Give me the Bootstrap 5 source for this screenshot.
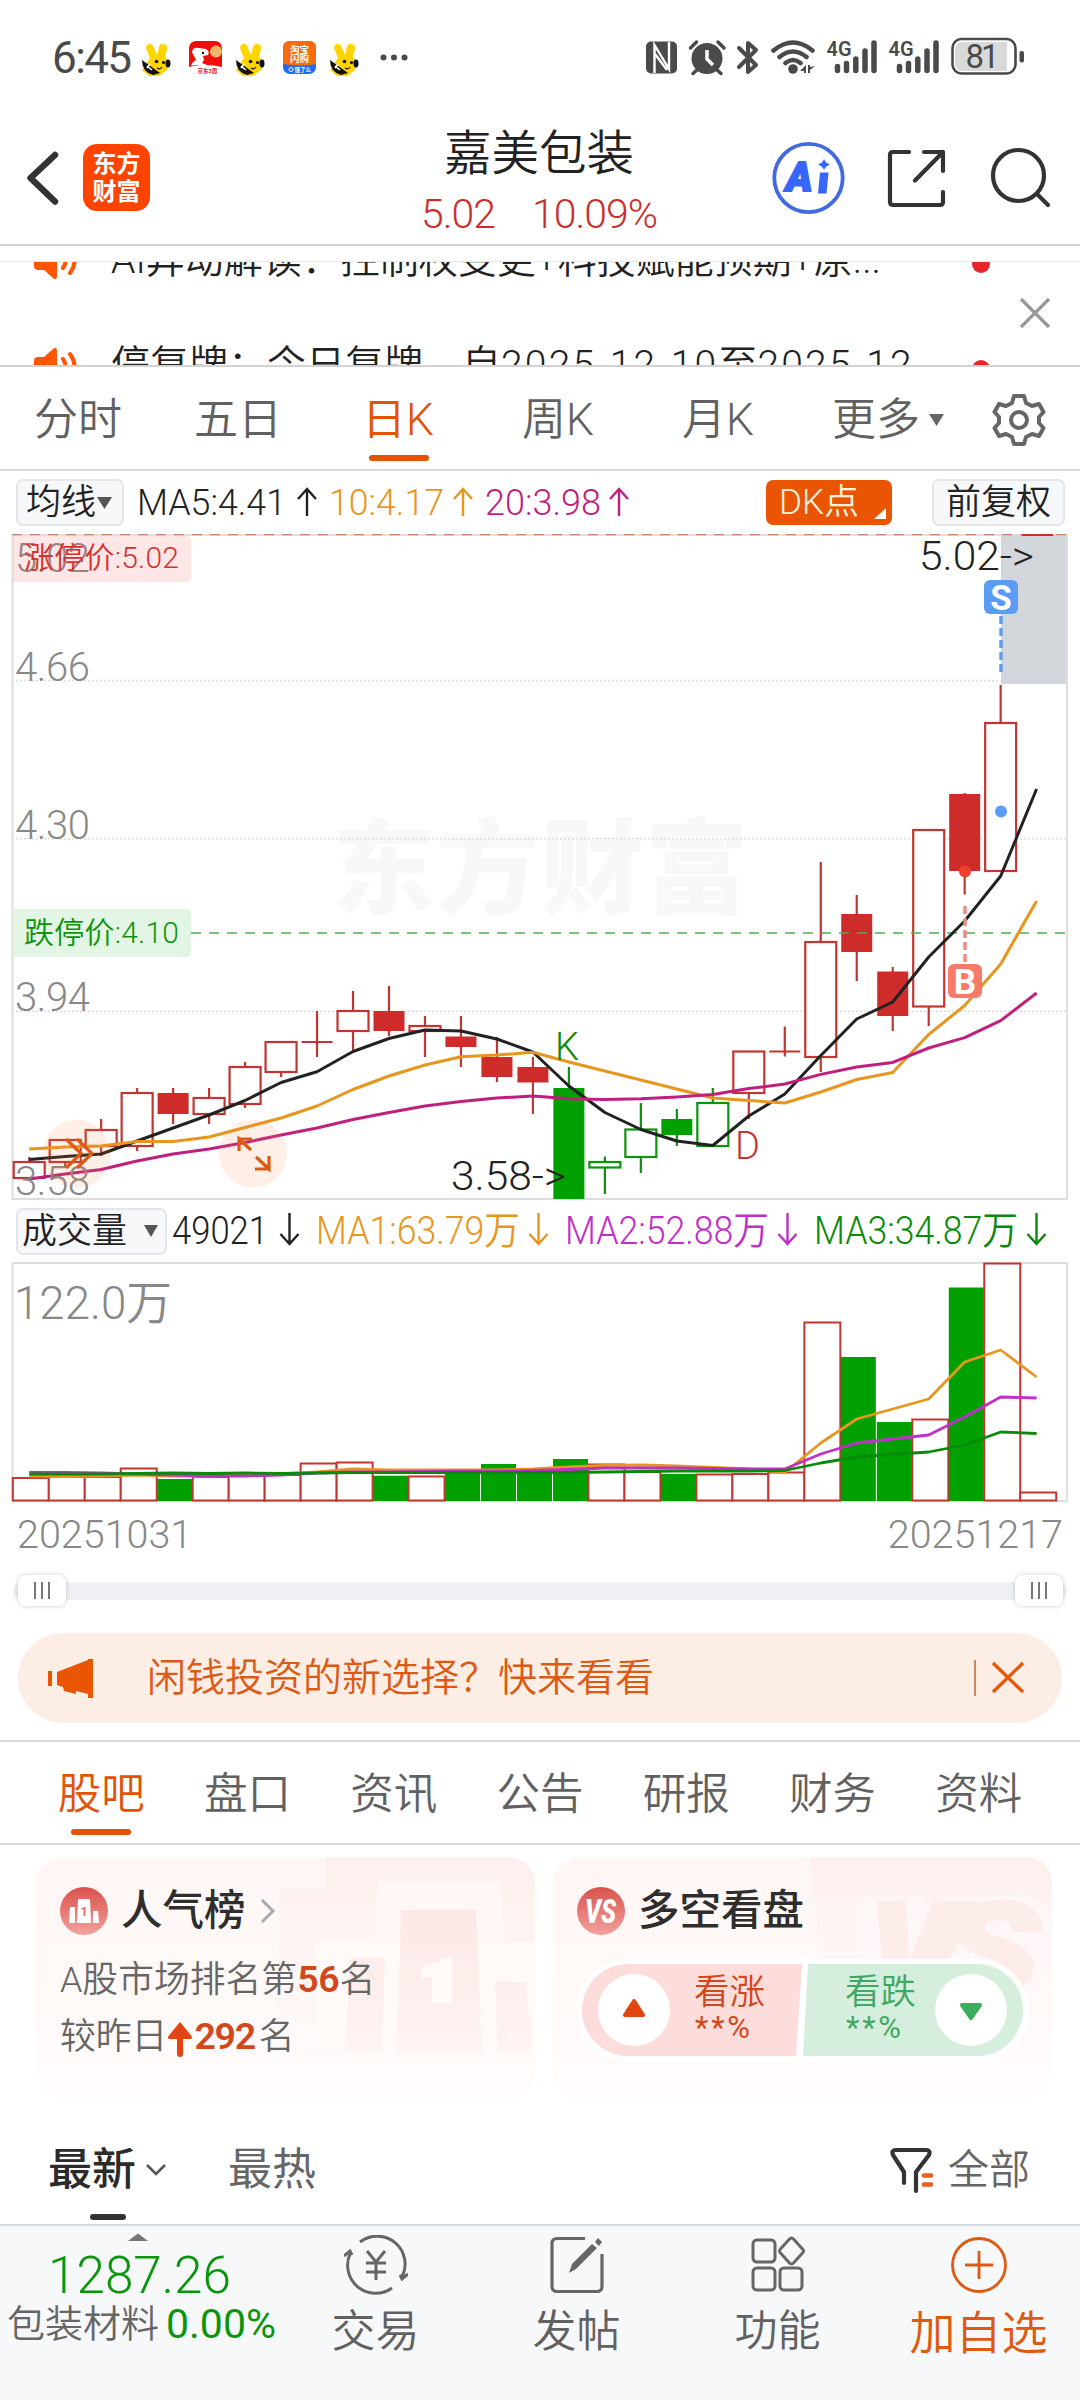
<!DOCTYPE html>
<html lang="zh-CN">
<head>
<meta charset="utf-8">
<meta name="viewport" content="width=device-width, initial-scale=1">
<title>嘉美包装</title>
<link href="https://cdn.jsdelivr.net/npm/bootstrap@5.3.0/dist/css/bootstrap.min.css" rel="stylesheet">
<style>
:root{--brand:#e35205;--up:#c9302c;--ink:#222;--mid:#616161}
html,body{overflow-x:hidden}
body{font-family:Roboto,"Noto Sans CJK SC",sans-serif;font-weight:350;color:var(--ink);background:#fff;line-height:1}
.screen{width:1080px;height:2400px;overflow:hidden}
svg{display:block;flex:none}
svg text{font-family:Roboto,"Noto Sans CJK SC",sans-serif}
.nw{white-space:nowrap}
.status{height:84px;padding:33px 0 1px 52px;color:#4a4a4a}
.clock{font-size:44px;width:84px;letter-spacing:-1.6px;font-weight:400}
.topbar{height:162px;border-bottom:2px solid #d3d3d3}
.back-ico{margin-left:26px}
.brand-logo{width:67px;height:67px;border-radius:14px;background:#ff4400;color:#fff;font-weight:700;font-size:24px;line-height:28px;margin-left:24px}
.stock-title{position:relative;width:300px;margin-left:239px}
.stock-name{font-size:47.5px;line-height:62px}
.stock-quote{font-size:41px;line-height:58px;color:var(--up);letter-spacing:-1px;gap:37px}
.gapline{height:16px;border-bottom:1px solid #e8e8e8}
.news{height:105px;border-bottom:2px solid #d3d3d3;position:relative}
.news-list{margin-top:-54px}
.news-item{height:105px;font-size:39px;padding-left:32px}
.news-item .news-text{margin-left:32px;width:834px}
.news-item .day{letter-spacing:2.2px}
.news-dot{width:18px;height:18px;border-radius:50%;background:#e8252b;margin-left:27px;margin-top:6px}
.news-close{position:absolute;left:1018px;top:34px}
.ktabs{height:104px;border-bottom:2px solid #dcdcdc;font-size:44px;color:var(--mid);position:relative;padding-top:3px}
.ktabs .k{width:160px;height:100%;margin-left:-1px;margin-right:1px;padding-right:2px}
.on{color:var(--brand)!important;position:relative}
.on::after{content:"";position:absolute;left:50%;margin-left:-30px;width:60px;height:6px;border-radius:3px;background:var(--brand);bottom:8px}
.ma-row{height:63px;padding-left:16px;font-size:35px}
.pick{height:47px;border:2px solid #e4e6ea;background:#f7f8fa;border-radius:7px;font-size:35px}
.dk{width:126px;height:45px;border-radius:7px;background:#ea5504;color:#fff3dc;position:relative;font-size:35px;padding-left:13px}
.vol-row{height:62px;padding-left:16px;font-size:36px}
.dates{height:64px;padding:2px 17px 0 17px;font-size:39.5px;color:#888}
.slider{height:50px;padding:0 13px;position:relative}
.track{height:18px;border-radius:9px;background:#f0f1f4}
.grip{width:48px;height:31px;border-radius:8px;background:#fff;box-shadow:0 0 5px rgba(0,0,0,.2);gap:5px;position:absolute;top:9px}
.grip i{width:2px;height:17px;background:#777}
.promo{height:90px;width:1044px;margin:17px 18px;border-radius:45px;background:#fdeee5;color:#dc5a14;font-size:39px}
.ftabs{height:105px;border-top:2px solid #d8d8d8;border-bottom:2px solid #d8d8d8;font-size:43.5px;color:var(--mid);padding:0 28px}
.ftabs .f{flex:1;height:100%;padding-top:4px}
.cards{padding:12px 28px 0 36px;gap:18px}
.tile{width:499px;height:241px;border-radius:26px;background:linear-gradient(#fff7f5,#fff9f8 60%,#fffdfc);position:relative;overflow:hidden}
.tile>.art{position:absolute;left:0;top:0}
.tile-body{position:relative}
.tile h2{font-size:41.5px;font-weight:500;color:#2e2e2e;line-height:1;margin:0 0 0 13px}
.tile-head{padding:30px 0 0 24px;height:78px}
.rank{font-size:35.8px;line-height:56px;color:#666;padding-left:24px;margin-top:16px}
.rank b{color:#d2481c;font-weight:600;font-size:37.5px;letter-spacing:-.3px}
.vote{position:absolute;left:24px;top:102px}
.feed{height:126px;padding:18px 0 0 48px;font-size:44px}
.feed .cur{font-weight:500;color:#2b2b2b;position:relative}
.feed .cur::after{content:"";position:absolute;left:42px;width:36px;height:6px;border-radius:3px;background:#333;top:66px}
.dock{height:176px;background:#f7f8fa;border-top:2px solid #d5dadf}
.dock .item{font-size:44px;color:var(--mid);width:201px;padding-top:9px}
.dock .lbl{margin-top:15px}
.index-box{width:275px;position:relative;padding-top:2px}
</style>
<script src="https://cdn.jsdelivr.net/npm/bootstrap@5.3.0/dist/js/bootstrap.bundle.min.js"></script>
</head>
<body>
<div class="screen d-flex flex-column">
  <!-- status bar -->
  <div class="status d-flex align-items-center flex-shrink-0">
    <span class="clock">6:45</span>
    <svg width="290" height="50" viewBox="136 33 290 50">
      <defs><g id="bee">
        <path d="M150 58 146 48q0-4 4-4 3 0 4 4l3 7 2-8q1-4 5-3 4 1 3 5l-2 8q7 7 2 13l-8 6h-10l-7-6Z" fill="#ffd500"/>
        <path d="M142 60 160 73 153 75Q142 72 142 60Z" fill="#111"/><path d="m147 66 5 4m-2-6-3 4" stroke="#fff" stroke-width="1.6"/>
        <ellipse cx="168" cy="63.500" rx="2.500" ry="4" fill="#111"/><circle cx="156.500" cy="61.500" r="1.800" fill="#111"/><circle cx="163.500" cy="62.500" r="1.600" fill="#111"/><path d="M157 68q3 2 5-1" fill="none" stroke="#111" stroke-width="1.200"/>
      </g></defs>
      <use href="#bee"/><use href="#bee" x="94"/><use href="#bee" x="188"/>
      <rect x="189" y="41" width="33" height="33" rx="7" fill="#f20d0d"/><path d="M189 67q16-4 33 0v1q0 6-7 6h-19q-7 0-7-6Z" fill="#fff"/>
      <circle cx="216" cy="51.500" r="6" fill="#f3b563"/><path d="M192 52q1-5 7-4l7 1q4 2 2 6l-5 1 1 4-2 3 5 2-2 2-9-2-5 1 2-4 3-2-2-4Z" fill="#fff"/><circle cx="203" cy="53" r="1.200"/>
      <text x="197.500" y="73" font-size="5.500" fill="#d22" font-weight="700">京东3周</text>
      <rect x="283" y="41" width="33" height="33" rx="7" fill="#1d6df0"/><path d="M283 64V48q0-7 7-7h19q7 0 7 7v16q-16 3-33 0Z" fill="#f76b0c"/>
      <text x="290" y="52.500" font-size="9.500" fill="#fff" font-weight="700">淘宝</text><text x="290" y="62" font-size="9.500" fill="#fff" font-weight="700">闪购</text>
      <circle cx="291" cy="69.500" r="2" fill="none" stroke="#fff" stroke-width="1"/><text x="294.500" y="72" font-size="5.500" fill="#fff" font-weight="700">饿了么</text>
      <g fill="#4a4a4a"><circle cx="383.500" cy="57.500" r="3"/><circle cx="394" cy="57.500" r="3"/><circle cx="404.500" cy="57.500" r="3"/></g>
    </svg>
    <svg width="400" height="50" viewBox="640 33 400 50" style="margin-left:214px" fill="#4a4a4a">
      <rect x="646" y="41.500" width="31" height="32" rx="5"/><path d="M654.500 73V45L669 69V42M655 54l12 16" fill="none" stroke="#fff" stroke-width="2.400"/>
      <circle cx="707" cy="58.500" r="15.500"/><path d="M707 50v9l6 6" fill="none" stroke="#fff" stroke-width="3.500"/><path d="m690.500 48 6-6M724 48l-6-6M698 69l-5 4.500M716 69l5 4.500" stroke="#4a4a4a" stroke-width="3.500" stroke-linecap="round"/>
      <path d="m739 48 17 17-8 7V43l8 7-17 17" fill="none" stroke="#4a4a4a" stroke-width="4" stroke-linejoin="round" stroke-linecap="round"/>
      <g fill="none" stroke="#4a4a4a" stroke-width="4.500" stroke-linecap="round"><path d="M773.500 50.500q19.500-16 39 0M779.500 57q13.500-11 27 0M785.500 63q7.500-6 15 0"/></g><circle cx="793" cy="69" r="4.800"/><path d="m800 71 6-6v8h-2v-2ZM808 65v8h2v-3l5-4-5 1v-2Z"/>
      <g id="sig"><text x="826.500" y="56" font-size="21" font-weight="600" textLength="25" lengthAdjust="spacingAndGlyphs">4G</text>
      <g stroke="#4a4a4a" stroke-width="5.500" stroke-linecap="round"><path d="M837.500 66.500v4M846.500 63.500v7M855.800 59v11.500M865 51v19.500M874 43v27.500"/></g></g>
      <use href="#sig" x="62"/>
      <rect x="952.500" y="39" width="63" height="34.500" rx="9" fill="#fff" stroke="#4a4a4a" stroke-width="2.600"/><path d="M1007 42v29h-45q-7-1-7-8V49q0-6 7-7Z" fill="#d9d9d9"/>
      <rect x="1019.500" y="51" width="4.500" height="11.500" rx="2"/><text x="965.500" y="67.500" font-size="33" font-weight="400" textLength="34">81</text>
    </svg>
  </div>

  <!-- title bar -->
  <header class="topbar d-flex align-items-center flex-shrink-0">
    <div class="d-flex align-items-center" style="margin-top:27px">
      <svg class="back-ico" width="33" height="60" viewBox="26 148.500 33 60"><path d="M55 155.500 30.500 178.500 55 202" fill="none" stroke="#333" stroke-width="6.500" stroke-linecap="round" stroke-linejoin="round"/></svg>
      <div class="brand-logo d-flex flex-column align-items-center justify-content-center nw"><span>东方</span><span>财富</span></div>
    </div>
    <div class="stock-title text-center nw" style="margin-top:37px">
      <div class="stock-name">嘉美包装</div>
      <div class="stock-quote d-flex justify-content-center"><span>5.02</span><span>10.09%</span></div>
    </div>
    <svg width="310" height="90" viewBox="760 133 310 90" style="margin:27px 0 0 71px">
      <circle cx="808.500" cy="178" r="34.200" fill="none" stroke="#4169e1" stroke-width="3.800"/>
      <text x="786" y="191" font-size="40" font-weight="900" font-style="italic" fill="#3766fb" stroke="#3766fb" stroke-width="2">A</text>
      <path d="M820 172.500h8.500l-2 21h-8.500ZM824 159q1.500 4 6 5.500-4.500 1.500-6 5.500-1.500-4-6-5.500 4.500-1.500 6-5.500Z" fill="#3766fb"/>
      <g fill="none" stroke="#333" stroke-width="4.200" stroke-linecap="round" stroke-linejoin="round">
      <path d="M909 152H893q-3 0-3 3v47q0 3 3 3h47q3 0 3-3V192M924 152h19v19M943 152 915 180.500"/>
      <circle cx="1018.500" cy="175.500" r="25.500"/><path d="m1037 194 11 11"/></g>
    </svg>
  </header>

  <!-- announcements, cut by the frame of their list -->
  <div class="gapline flex-shrink-0"></div>
  <div class="news flex-shrink-0 overflow-hidden">
    <div class="news-list">
      <div class="news-item d-flex align-items-center nw"><svg width="47" height="36" viewBox="0 0 47 36"><use href="#horn"/></svg><span class="news-text">AI异动解读：控制权变更+科技赋能预期+原...</span><span class="news-dot"></span></div>
      <div class="news-item d-flex align-items-center nw"><svg width="47" height="36" viewBox="0 0 47 36"><g id="horn"><path d="M2 13q0-4 4-4h6L21 1q4-3 4 2v30q0 5-4 2l-9-8H6q-4 0-4-4Z" fill="#ff5500"/><path d="M31 11q5 7 0 14M38 6q9 12 0 24" fill="none" stroke="#ff5500" stroke-width="4" stroke-linecap="round"/></g></svg><span class="news-text">停复牌：今日复牌，自<span class="day">2025-12-10</span>至<span class="day">2025-12</span></span><span class="news-dot"></span></div>
    </div>
    <svg class="news-close" width="34" height="34" viewBox="0 0 34 34"><path d="m3 3 28 28M31 3 3 31" stroke="#999" stroke-width="3.200"/></svg>
  </div>

  <!-- period tabs -->
  <nav class="ktabs d-flex flex-shrink-0 nw">
    <span class="k d-flex align-items-center justify-content-center">分时</span><span class="k d-flex align-items-center justify-content-center">五日</span><span class="k on d-flex align-items-center justify-content-center">日K</span><span class="k d-flex align-items-center justify-content-center">周K</span><span class="k d-flex align-items-center justify-content-center">月K</span>
    <span class="d-flex align-items-center" style="margin-left:32px">更多<svg width="15" height="12" style="margin-left:9px"><path d="M0 0h15L7.500 12Z" fill="#666"/></svg></span>
    <svg class="align-self-center" width="56" height="56" viewBox="-28 -28 56 56" style="margin-left:47px"><path d="M-5-24H5L7-17 13-14 20-16 24.500-8 20-3V3l4.500 5L20 16l-7-2-6 3-2 7H-5l-2-7-6-3-7 2-4.500-8L-20 3V-3l-4.500-5L-20-16l7 2 6-3Z" fill="none" stroke="#666" stroke-width="4" stroke-linejoin="round"/><circle r="8" fill="none" stroke="#666" stroke-width="4"/></svg>
  </nav>

  <!-- moving averages -->
  <div class="ma-row d-flex align-items-center flex-shrink-0 nw">
    <span class="pick d-flex align-items-center" style="width:108px;padding-left:8px">均线<svg width="15" height="12" style="margin-left:1px"><path d="M0 0h15L7.500 12Z" fill="#555"/></svg></span>
    <svg width="620" height="50" viewBox="124 478 620 50" font-size="37">
      <text x="137" y="515" textLength="149" lengthAdjust="spacingAndGlyphs" fill="#222">MA5:4.41</text><text x="329" y="515" textLength="115" lengthAdjust="spacingAndGlyphs" fill="#e8961e">10:4.17</text><text x="485" y="515" textLength="116" lengthAdjust="spacingAndGlyphs" fill="#c01f7e">20:3.98</text>
      <g fill="none" stroke-width="2.400"><path d="M307 516V489m-9 10 9-10 9 10" stroke="#222"/><path d="M463 516V489m-9 10 9-10 9 10" stroke="#e8961e"/><path d="M619 516V489m-9 10 9-10 9 10" stroke="#c01f7e"/></g>
    </svg>
    <span class="dk d-flex align-items-center" style="margin-left:22px">DK点<svg width="12" height="11" style="position:absolute;right:6px;bottom:6px"><path d="M12 0v11H0Z" fill="#fff"/></svg></span>
    <span class="pick d-flex align-items-center justify-content-center" style="width:133px;margin-left:40px">前复权</span>
  </div>

  <svg id="kchart" class="flex-shrink-0" width="1080" height="666" viewBox="0 534 1080 666"></svg>

  <!-- volume legend -->
  <div class="vol-row d-flex align-items-center flex-shrink-0 nw">
    <span class="pick d-flex align-items-center" style="width:151px;padding-left:4px">成交量<svg width="14" height="12" style="margin-left:17px"><path d="M0 0h14L7 12Z" fill="#555"/></svg></span>
    <svg width="900" height="50" viewBox="167 1207 900 50" font-size="39">
      <text x="172" y="1245" textLength="96" lengthAdjust="spacingAndGlyphs" fill="#222">49021</text><text x="316" y="1245" textLength="204" lengthAdjust="spacingAndGlyphs" fill="#e8961e">MA1:63.79万</text><text x="565" y="1245" textLength="204" lengthAdjust="spacingAndGlyphs" fill="#c02fc8">MA2:52.88万</text><text x="814" y="1245" textLength="204" lengthAdjust="spacingAndGlyphs" fill="#0a8a0a">MA3:34.87万</text>
      <g fill="none" stroke-width="2.400"><path d="M289.500 1214v31m-9-10 9 10 9-10" stroke="#222"/><path d="M538.500 1214v31m-9-10 9 10 9-10" stroke="#e8961e"/><path d="M787.500 1214v31m-9-10 9 10 9-10" stroke="#c02fc8"/><path d="M1036.500 1214v31m-9-10 9 10 9-10" stroke="#0a8a0a"/></g>
    </svg>
  </div>
  <svg id="vchart" class="flex-shrink-0" width="1080" height="240" viewBox="0 1262 1080 240"></svg>
  <div class="dates d-flex justify-content-between align-items-center flex-shrink-0"><span>20251031</span><span>20251217</span></div>

  <div class="slider flex-shrink-0 d-flex flex-column justify-content-center">
    <div class="track"></div>
    <span class="grip d-flex align-items-center justify-content-center" style="left:18px"><i></i><i></i><i></i></span>
    <span class="grip d-flex align-items-center justify-content-center" style="right:17px"><i></i><i></i><i></i></span>
  </div>

  <div class="promo d-flex align-items-center flex-shrink-0 nw">
    <svg width="48" height="42" viewBox="46 1656 48 42" style="margin-left:28px"><path d="M48 1670h4v15h-4zM57 1671 88 1659v-1h5v39h-5v-4l-12-3v3l-12-3-1-4-6-2Z" fill="#ea5504"/></svg>
    <span style="margin-left:53px">闲钱投资的新选择？快来看看</span>
    <svg width="54" height="40" viewBox="972 1658 54 40" class="ms-auto" style="margin-right:36px"><path d="M975 1660v36" stroke="#c98a60" stroke-width="2"/><path d="m993 1663 30 29M1023 1663l-30 29" stroke="#ea5504" stroke-width="3.200"/></svg>
  </div>

  <nav class="ftabs d-flex flex-shrink-0 nw">
    <span class="f on d-flex align-items-center justify-content-center">股吧</span><span class="f d-flex align-items-center justify-content-center">盘口</span><span class="f d-flex align-items-center justify-content-center">资讯</span><span class="f d-flex align-items-center justify-content-center">公告</span><span class="f d-flex align-items-center justify-content-center">研报</span><span class="f d-flex align-items-center justify-content-center">财务</span><span class="f d-flex align-items-center justify-content-center">资料</span>
  </nav>

  <!-- community tiles -->
  <div class="cards d-flex flex-shrink-0 nw">
    <section class="tile">
      <svg class="art" width="499" height="241" viewBox="36 1857 499 241">
        <defs><linearGradient id="fade" x1="0" y1="0" x2="0" y2="1"><stop offset="0" stop-color="#fdf0ee"/><stop offset="1" stop-color="#fffaf9"/></linearGradient><linearGradient id="fade2" x1="0" y1="0" x2="0" y2="1"><stop offset="0" stop-color="#fce8e7"/><stop offset="1" stop-color="#fef4f2"/></linearGradient></defs>
        <path d="M326 1857H535V2060H279V1889H326Z" fill="url(#fade)"/><path d="M314 1939h60l4-58H500l5 60h30V2055H314Z" fill="#fff9f8" opacity=".75"/>
        <path d="M350 1958h35l-3 95h-37ZM401 1910h75l6 143h-85ZM495 1982h31l6 71h-34Z" fill="url(#fade2)"/><path d="m421 1968 31-12v47h-20v-27l-11 3Z" fill="#fff9f8"/>
      </svg>
      <div class="tile-body">
        <div class="tile-head d-flex align-items-center">
          <svg width="48" height="48" viewBox="0 0 48 48"><defs><linearGradient id="ball" x1="0" y1="0" x2="0" y2="1"><stop offset="0" stop-color="#db514d"/><stop offset="1" stop-color="#f3a29d"/></linearGradient></defs><circle cx="24" cy="24" r="24" fill="url(#ball)"/><path d="M10 20h5v16H9ZM18 12h12l1 24H17ZM33 24h5l1 12h-6Z" fill="#fff"/><text x="20.500" y="28.500" font-size="12.500" font-weight="700" fill="#e06c66">1</text></svg>
          <h2>人气榜</h2>
          <svg width="16" height="26" style="margin-left:14px"><path d="m2 2 11 11L2 24" fill="none" stroke="#aaa" stroke-width="3"/></svg>
        </div>
        <div class="rank">A股市场排名第<b>56</b>名<br>较昨日<svg class="d-inline-block" width="26" height="36" viewBox="0 0 26 36" style="vertical-align:-9px"><path d="M13 0 24.500 14q1.500 3-1.500 3h-7v15q0 3-3 3t-3-3V17H3q-3 0-1.500-3Z" fill="#e24412"/></svg><b style="margin:0 4px 0 1px;letter-spacing:-1.3px">292</b>名</div>
      </div>
    </section>
    <section class="tile">
      <svg class="art" width="499" height="241" viewBox="553 1857 499 241">
        <path d="M810 1857h242v100l-30 60H826Z" fill="url(#fade)"/><path d="M856 1896h65l12 10 16-10h80l23 14v60l-20 30H862Z" fill="#fff8f7" opacity=".8"/>
        <path d="M877 1901h29l3 60 24-60h46l-48 95h-46Z" fill="#fcecea"/>
        <text x="942" y="1994" font-size="128" font-weight="900" font-style="italic" fill="#fcecea" textLength="97" lengthAdjust="spacingAndGlyphs" stroke="#fcecea" stroke-width="4">S</text>
      </svg>
      <div class="tile-body">
        <div class="tile-head d-flex align-items-center">
          <svg width="48" height="48" viewBox="0 0 48 48"><circle cx="24" cy="24" r="24" fill="url(#ball)"/><text x="8" y="36" font-size="33" font-weight="900" font-style="italic" fill="#fff" textLength="31" lengthAdjust="spacingAndGlyphs">VS</text></svg>
          <h2>多空看盘</h2>
        </div>
      </div>
      <svg class="vote" width="454" height="104" viewBox="577 1959 454 104">
        <rect x="577" y="1959" width="452" height="102" rx="51" fill="#fff"/>
        <path d="M628 1964H802L796 2056H628a46 46 0 0 1 0-92Z" fill="#fddddb"/><path d="M808 1964H977a46 46 0 0 1 0 92H803Z" fill="#d6eedd"/>
        <circle cx="634" cy="2010" r="36" fill="#fff"/><circle cx="971" cy="2010" r="36" fill="#fff"/>
        <path d="m634 2001 9 14h-18Z" fill="#e24412" stroke="#e24412" stroke-width="4" stroke-linejoin="round"/><path d="m971 2018 9-13h-18Z" fill="#3cae60" stroke="#3cae60" stroke-width="4" stroke-linejoin="round"/>
        <g font-size="35.500" fill="#d2481c"><text x="694" y="2004">看涨</text><text x="695" y="2038" font-size="31" font-weight="400" textLength="55">**%</text></g>
        <g font-size="35.500" fill="#3fa862"><text x="845" y="2004">看跌</text><text x="846" y="2038" font-size="31" font-weight="400" textLength="55">**%</text></g>
      </svg>
    </section>
  </div>

  <div class="feed d-flex align-items-center flex-shrink-0 nw">
    <span class="cur">最新</span><svg width="22" height="14" style="margin-left:9px"><path d="m2 2 9 9 9-9" fill="none" stroke="#555" stroke-width="2.600"/></svg>
    <span style="margin-left:61px;color:#666" class="fw-normal">最热</span>
    <svg width="44" height="48" viewBox="890 2145 44 48" style="margin-left:574px"><path d="M904 2182V2171L893 2154q-2-5 3-5h30q5 0 3 5L916 2171v19" fill="none" stroke="#333" stroke-width="4.200" stroke-linecap="round" stroke-linejoin="round"/><path d="M924 2174.500h7M924 2183.500h7" stroke="#e8601c" stroke-width="4.600" stroke-linecap="round"/></svg>
    <span style="margin-left:14px;color:#666;font-size:41px">全部</span>
  </div>

  <!-- dock -->
  <footer class="dock d-flex flex-shrink-0 nw">
    <div class="index-box">
      <svg width="275" height="120" viewBox="0 2228 275 120"><path d="m138 2233.500 10 7.500h-20Z" fill="#777"/><text x="48" y="2293" font-size="52" fill="#0a960a" textLength="183" lengthAdjust="spacingAndGlyphs">1287.26</text><text x="7" y="2337" font-size="38" fill="#666" textLength="152">包装材料</text><text x="166" y="2338" font-size="41" fill="#0a960a" font-weight="400" textLength="110" lengthAdjust="spacingAndGlyphs">0.00%</text></svg>
    </div>
    <div class="item d-flex flex-column align-items-center"><svg width="64" height="60" viewBox="-32 -30 64 60" fill="none" stroke="#666" stroke-width="3"><path d="M-16-23A28 28 0 0 1 26 12M16 23A28 28 0 0 1-26-11M-32-9l6-5 2 4M32 9l-6 5-2-4M-9-14 0-3 9-14M0-3v18M-10-2h20M-10 7h20"/></svg><span class="lbl">交易</span></div>
    <div class="item d-flex flex-column align-items-center"><svg width="60" height="60" viewBox="-30 -30 60 60" fill="none" stroke="#666" stroke-width="3.200"><path d="M8-26.500H-20q-5 0-5 5v43q0 5 5 5H20q5 0 5-5V-11"/><path d="M-8 8l3-9L15-21l5 4L-1 4ZM18-23l3-4 4 4-3 4Z" fill="#666" stroke="none"/></svg><span class="lbl">发帖</span></div>
    <div class="item d-flex flex-column align-items-center"><svg width="60" height="60" viewBox="-30 -30 60 60" fill="none" stroke="#666" stroke-width="3"><rect x="-25" y="-25" width="22" height="22" rx="4"/><rect x="-25" y="3" width="22" height="22" rx="4"/><rect x="2" y="3" width="22" height="22" rx="4"/><path d="M11.500-26q2-2 4 0l9 10q2 2 0 4l-9 10q-2 2-4 0l-9-10q-2-2 0-4Z"/></svg><span class="lbl" style="font-size:43px">功能</span></div>
    <div class="item d-flex flex-column align-items-center" style="color:#dd5a12"><svg width="60" height="60" viewBox="-30 -30 60 60" fill="none" stroke="#dd5a12" stroke-width="2.800"><circle r="26.500"/><path d="M-14 0h28M0-14v28"/></svg><span class="lbl" style="font-size:46px">加自选</span></div>
  </footer>
</div>

<script>
const RED='#c23531', FILL='#ce2c2b', GRN='#00a000';
const cx=i=>29.2+35.98*i;
const line=(ys,c,w=3)=>`<polyline points="${ys.map((y,i)=>cx(i).toFixed(1)+','+y).join(' ')}" fill="none" stroke="${c}" stroke-width="${w}" stroke-linejoin="round"/>`;

// kind, body top, body bottom, wick top, wick bottom
const K=[['r',1162,1178,1157,1178],['r',1140,1162,1140,1167],['r',1130,1146,1119,1156],['r',1093,1146,1088,1151],['R',1093,1114,1088,1124],['r',1098,1114,1088,1124],['r',1067,1104,1062,1108],['r',1042,1072,1042,1077],['x',1042,1042,1011,1057],['r',1011,1031,991,1051],['R',1011,1031,986,1036],['r',1026,1031,1016,1057],['R',1036.5,1047,1016,1067],['R',1057,1077,1037,1082],['R',1067,1082.5,1057,1114],['G',1088,1199,1067,1199],['g',1162,1167.5,1156.5,1194],['g',1129.5,1157,1103,1173],['G',1119,1135,1109,1146],['g',1103,1146,1088,1146],['r',1051.5,1093,1051.5,1119],['x',1051.5,1051.5,1026.5,1056.5],['r',942,1057,862,1072],['R',914,952,895,981],['R',971.5,1016,967,1031],['r',830,1006.5,830,1026],['R',794,871,793,894.5],['r',723,871,685,871]];
const ma5=[1159.5,1156.5,1154,1141,1128,1115,1100.5,1082.5,1071.7,1051.5,1038.5,1030,1031,1039,1052,1086,1112.5,1129.5,1141,1145.5,1116,1094,1055.5,1019,1002,957,921,876,789];
const ma10=[1149,1147,1146,1141.5,1141.5,1137,1127.5,1118,1106,1089.5,1076,1065,1056.7,1055,1052.3,1062,1071,1080,1089,1098,1100.5,1103,1092,1079.5,1072.5,1034.5,1005.5,964,901];
const ma20=[1179,1174,1169.5,1161,1154,1149,1142.5,1135,1128,1119.5,1112.5,1106,1101.5,1098,1096,1098.7,1099.6,1098.7,1097,1094.6,1088.6,1084,1074.4,1067,1062.4,1048,1037.6,1020.6,993];

let s=`<text x="332" y="906" font-size="103" font-weight="900" fill="#f8f8f8" textLength="416">东方财富</text>`;
for(const y of [680.5,838.8,1011.2]) s+=`<path d="M12 ${y}H1067" stroke="#dcdcdc" stroke-width="1.500" stroke-dasharray="2 2"/>`;
s+=`<rect x="12.500" y="535" width="1054.500" height="664" fill="none" stroke="#dedede" stroke-width="2"/>
<rect x="1001" y="535" width="65" height="149" fill="#d3d7dc"/>
<path d="M12 534.500H1067" stroke="#c9886a" stroke-width="1.600" stroke-dasharray="10 8"/><path d="M1022 535h31" stroke="#ce2c2b" stroke-width="2"/>`;
K.forEach(([k,t,b,wt,wb],i)=>{
  const x=cx(i),c=k.toLowerCase()==='g'?'#0d940d':RED;
  if(k==='x'){s+=`<path d="M${x-15.5} ${t}h31M${x} ${wt}V${wb}" stroke="${c}" stroke-width="2.200"/>`;return}
  if(k==='R'||k==='G'){s+=`<path d="M${x} ${wt}V${wb}" stroke="${c}" stroke-width="2.200"/><rect x="${x-15.5}" y="${t}" width="31" height="${b-t}" fill="${k==='R'?FILL:GRN}"/>`;return}
  s+=`<path d="M${x} ${wt}V${t}M${x} ${b}V${wb}" stroke="${c}" stroke-width="2.200"/><rect x="${x-15.5}" y="${t}" width="31" height="${b-t}" fill="#fff" stroke="${c}" stroke-width="2.200"/>`;
});
s+=`<path d="M191 933H1067" stroke="#4caf50" stroke-width="1.600" stroke-dasharray="10 8"/>`;
s+=line(ma5,'#222')+line(ma10,'#e8961e')+line(ma20,'#c01f7e');
s+=`<g fill="#888" font-size="40">
<text x="15" y="681" textLength="75">4.66</text><text x="15" y="839" textLength="75">4.30</text><text x="15" y="1010.500" textLength="75">3.94</text><text x="15" y="1195" textLength="75">3.58</text><text x="15" y="571.500" textLength="75">5.02</text></g>
<path d="M13 536H186q5 0 5 5v36q0 5-5 5H13Z" fill="#ff6060" fill-opacity=".15"/><text x="24" y="568" font-size="30" fill="#d4302e" textLength="155">涨停价:5.02</text>
<path d="M13 909H186q5 0 5 5v38q0 5-5 5H13Z" fill="#e3f5e4"/><text x="24" y="943" font-size="30" fill="#0d940d" textLength="155">跌停价:4.10</text>
<circle cx="77" cy="1153.500" r="34" fill="#ff8040" fill-opacity=".13"/><circle cx="253" cy="1153.500" r="34" fill="#ff8040" fill-opacity=".13"/>
<g fill="none" stroke="#dd5a12" stroke-width="3.200"><path d="m66 1139 15 14.500L66 1168M77 1139l15 14.500L77 1168"/><path d="m251 1150-12-11v12m0-12h13M256 1157l13 12v-13m0 13h-14"/></g>
<g font-size="40" fill="#222"><text x="919" y="569.500" textLength="115" lengthAdjust="spacingAndGlyphs">5.02-&gt;</text><text x="451" y="1190" textLength="115" lengthAdjust="spacingAndGlyphs">3.58-&gt;</text></g>
<text x="555" y="1060" font-size="38" fill="#0a8a0a">K</text><text x="735" y="1159" font-size="38" fill="${RED}">D</text>
<path d="M1001 616v56" stroke="#5a9cf8" stroke-width="3.400" stroke-dasharray="8 4"/><rect x="984" y="580" width="34" height="34" rx="6" fill="#5a9cf4"/><text x="1001" y="610" font-size="35" font-weight="700" fill="#fff" text-anchor="middle">S</text><circle cx="1001" cy="811.500" r="6" fill="#5a9cf8"/>
<circle cx="965" cy="871.500" r="6" fill="#f0402c"/><path d="M965 906v56" stroke="#f08a7c" stroke-width="3.400" stroke-dasharray="8 4"/><rect x="948" y="964" width="34" height="34" rx="6" fill="#f97a68"/><text x="965" y="993.500" font-size="35" font-weight="700" fill="#fff" text-anchor="middle">B</text>`;
document.getElementById('kchart').innerHTML=s;

// volume bars: colour and top edge
const V=['r1478','r1477','r1477','r1468.5','g1479','r1477','r1474','r1475','r1463.5','r1462.5','g1475.700','r1476.500','g1472','g1464','g1468','g1459','r1464.5','r1472','g1474','r1474.5','r1474','r1472.5','r1322.5','g1357','g1422','r1419.5','g1287.5','r1263.5','r1492.5'];
const v1=[1476,1476.5,1476,1475,1476,1476,1475,1474,1472,1469,1470,1470,1470,1470,1469,1467,1465.5,1465,1466,1467.5,1469,1472.5,1443,1419,1409,1399,1362,1350,1377];
const v2=[1472.5,1472.5,1473,1474,1475,1476,1476,1475,1473,1472,1472,1471.5,1471,1471,1470.5,1469.5,1468,1468,1468,1468.5,1469,1469,1454,1443,1439,1435,1417,1397,1398];
const v3=[1474,1474,1474,1473.5,1473,1473.5,1473,1473.5,1473,1472.5,1472.5,1472.5,1472.5,1472.5,1472.5,1472.5,1472,1471.5,1471,1471,1471,1470.5,1463,1457,1454.5,1452,1445,1432,1433.5];
s=`<rect x="12.500" y="1263" width="1054.500" height="238" fill="none" stroke="#dedede" stroke-width="2"/>`;
V.forEach((v,i)=>{const x=12.8+35.98*i,t=+v.slice(1);
  s+=v[0]==='g'?`<rect x="${x+.5}" y="${t}" width="35" height="${1501-t}" fill="${GRN}"/>`:`<rect x="${x}" y="${t}" width="36" height="${1500.5-t}" fill="#fff" stroke="${RED}" stroke-width="2"/>`});
s+=line(v1,'#e8961e',2.8)+line(v2,'#c02fc8',2.8)+line(v3,'#0a8a0a',2.8)+`<text x="14" y="1318.500" font-size="46" fill="#888" textLength="158" lengthAdjust="spacingAndGlyphs">122.0万</text>`;
document.getElementById('vchart').innerHTML=s;
</script>
</body>
</html>
